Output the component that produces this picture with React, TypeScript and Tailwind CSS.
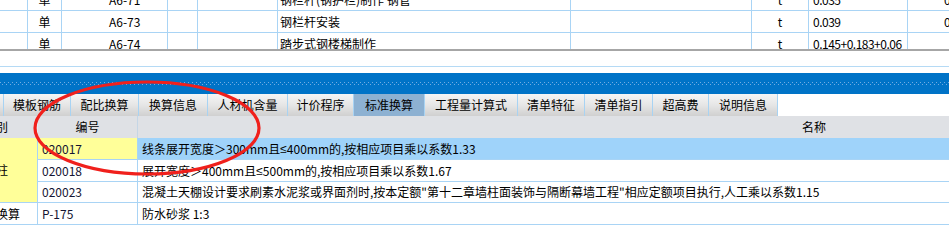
import React from 'react';

const topCols: { w: string; c: string }[] = [
  { w: 'w-[28px] border-r', c: '' },
  { w: 'w-[34px] border-r', c: 'justify-center' },
  { w: 'w-[106px] border-r', c: 'pl-[47px]' },
  { w: 'w-[30px] border-r', c: '' },
  { w: 'w-[80px] border-r', c: '' },
  { w: 'w-[293px] border-r', c: 'pl-[2px]' },
  { w: 'w-[181px] border-r', c: '' },
  { w: 'w-[57px] border-r', c: 'justify-center' },
  { w: 'w-[99px] border-r', c: 'pl-[4px] tracking-[-0.5px]' },
  { w: 'w-[41px]', c: 'pl-[36px]' },
];

const topRows: string[][] = [
  ['', '单', 'A6-71', '', '', '钢栏杆(钢护栏)制作 钢管', '', 't', '0.035', '0.035'],
  ['', '单', 'A6-73', '', '', '钢栏杆安装', '', 't', '0.039', '0.039'],
  ['', '单', 'A6-74', '', '', '踏步式钢楼梯制作', '', 't', '0.145+0.183+0.06', ''],
];

const tabs: { t: string; w: string; sel?: boolean }[] = [
  { t: '', w: 'w-[4px]' },
  { t: '模板钢筋', w: 'w-[67px]' },
  { t: '配比换算', w: 'w-[68px]' },
  { t: '换算信息', w: 'w-[69px]' },
  { t: '人材机含量', w: 'w-[80px]' },
  { t: '计价程序', w: 'w-[66px]' },
  { t: '标准换算', w: 'w-[71px]', sel: true },
  { t: '工程量计算式', w: 'w-[93px]' },
  { t: '清单特征', w: 'w-[67px]' },
  { t: '清单指引', w: 'w-[68px]' },
  { t: '超高费', w: 'w-[56px]' },
  { t: '说明信息', w: 'w-[69px]' },
];

function Le() {
  return <span className="font-['Noto_Sans',sans-serif]">≤</span>;
}

export default function App() {
  return (
    <div className="relative w-[949px] h-[244px] overflow-hidden bg-white text-[12px] leading-none text-black font-['Noto_Sans_CJK_SC','Noto_Sans',sans-serif]">
      {/* top table */}
      <div className="h-[49px] overflow-hidden">
        <div className="-mt-[11px]">
          {topRows.map((row, ri) => (
            <div key={ri} className="flex h-[22px] border-b border-[#a9d4f5]">
              {row.map((cell, ci) => (
                <div
                  key={ci}
                  className={`${topCols[ci].w} ${topCols[ci].c} shrink-0 flex items-center border-[#a9d4f5] whitespace-nowrap overflow-hidden`}
                >
                  {cell}
                </div>
              ))}
            </div>
          ))}
        </div>
      </div>
      <div className="h-[2px] bg-[#a6a6a6]" />
      <div className="h-[15px]" />
      <div className="h-px bg-[#b5daf5]" />
      <div className="h-[6px]" />

      {/* blue splitter bar */}
      <div className="h-[21px] bg-[#0073c7] flex flex-col justify-center">
        <svg width="949" height="4" className="block">
          <defs>
            <pattern id="dots" width="4" height="4" patternUnits="userSpaceOnUse">
              <rect x="0" y="0" width="1" height="1" fill="#72acE2" />
              <rect x="2" y="2" width="1" height="1" fill="#72ace2" />
            </pattern>
          </defs>
          <rect width="949" height="4" fill="url(#dots)" />
        </svg>
      </div>

      {/* tabs */}
      <div className="flex h-[22px] bg-white">
        {tabs.map((tab, i) => (
          <div
            key={i}
            className={`${tab.w} h-full flex items-center justify-center border-r border-[#a8d3f3] whitespace-nowrap ${
              tab.sel ? 'bg-[#8db1d2]' : 'bg-linear-to-b from-[#f5f5f5] via-[#e6e6e6] to-[#d0d0d0]'
            }`}
          >
            {tab.t}
          </div>
        ))}
      </div>

      {/* header */}
      <div className="flex h-[22px] bg-[#dfe1e5]">
        <div className="w-[38px] overflow-hidden flex items-center border-r border-[#e8ecf2] whitespace-nowrap">
          <span className="ml-[-16px]">类别</span>
        </div>
        <div className="w-[100px] flex items-center justify-center border-r border-[#c5d6e6]">编号</div>
        <div className="flex-1 flex items-center pl-[664px] whitespace-nowrap">名称</div>
      </div>

      {/* body */}
      <div className="grid grid-cols-[38px_100px_1fr] grid-rows-[22px_22px_21px_22px]">
        <div className="row-span-3 bg-[#ffff99] border-r border-b border-[#a9d4f5] overflow-hidden flex items-center whitespace-nowrap">
          <span className="ml-[-16px]">墙柱</span>
        </div>
        <div className="bg-[#ffff99] border-r border-b border-[#a9d4f5] flex items-center pl-[4px] text-[#141432]">020017</div>
        <div className="bg-[#9fd3fa] border-b border-[#a9d4f5] flex items-center pl-[4px] whitespace-nowrap overflow-hidden">
          线条展开宽度＞300mm且<Le />400mm的,按相应项目乘以系数1.33
        </div>
        <div className="border-r border-b border-[#a9d4f5] flex items-center pl-[4px] text-[#141432]">020018</div>
        <div className="border-b border-[#a9d4f5] flex items-center pl-[4px] whitespace-nowrap overflow-hidden">
          展开宽度＞400mm且<Le />500mm的,按相应项目乘以系数1.67
        </div>
        <div className="border-r border-b border-[#a9d4f5] flex items-center pl-[4px] text-[#141432]">020023</div>
        <div className="border-b border-[#a9d4f5] flex items-center pl-[4px] whitespace-nowrap overflow-hidden">
          混凝土天棚设计要求刷素水泥浆或界面剂时,按本定额"第十二章墙柱面装饰与隔断幕墙工程"相应定额项目执行,人工乘以系数1.15
        </div>
        <div className="border-r border-b border-[#a9d4f5] overflow-hidden flex items-center whitespace-nowrap">
          <span className="ml-[-28px]">砂浆换算</span>
        </div>
        <div className="border-r border-b border-[#a9d4f5] flex items-center pl-[4px] text-[#141432]">P-175</div>
        <div className="border-b border-[#a9d4f5] flex items-center pl-[4px] whitespace-nowrap">防水砂浆 1:3</div>
      </div>

      {/* red annotation ellipse */}
      <svg
        className="absolute left-0 top-0 pointer-events-none"
        width="949"
        height="244"
        viewBox="0 0 949 244"
      >
        <ellipse cx="147" cy="128" rx="112" ry="46" fill="none" stroke="#f0201c" strokeWidth="3.2" />
      </svg>
    </div>
  );
}
